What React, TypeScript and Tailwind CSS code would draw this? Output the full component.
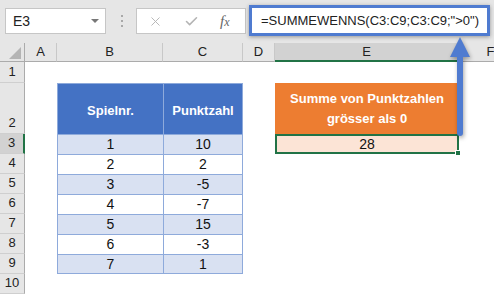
import { X, Check } from "lucide-react";

const rows = [
  { nr: "1", pts: "10" },
  { nr: "2", pts: "2" },
  { nr: "3", pts: "-5" },
  { nr: "4", pts: "-7" },
  { nr: "5", pts: "15" },
  { nr: "6", pts: "-3" },
  { nr: "7", pts: "1" },
];

const font = "font-['Liberation_Sans',Arial,sans-serif]";

function ColHeader({ label, selected }: { label: string; selected?: boolean }) {
  return (
    <div
      className={
        "flex items-center justify-center border-r border-[#c8c8c8] text-[13px] text-[#222] " +
        (selected
          ? "border-b-2 border-b-[#217346] bg-[#d2d2d2]"
          : "border-b border-b-[#ababab] bg-[#e6e6e6]")
      }
    >
      {label}
    </div>
  );
}

function RowHeader({ n, selected }: { n: number; selected?: boolean }) {
  return (
    <div
      className={
        "flex items-end justify-center border-b border-[#cfcfcf] pb-[1px] text-[13px] text-[#222] " +
        (selected
          ? "border-r-2 border-r-[#217346] bg-[#d2d2d2]"
          : "border-r border-r-[#ababab] bg-[#e6e6e6]")
      }
    >
      {n}
    </div>
  );
}

export default function App() {
  return (
    <div className={`relative h-[294px] w-[494px] overflow-hidden bg-white ${font}`}>
      {/* toolbar */}
      <div className="flex h-[43px] items-start bg-[#e6e6e6] pt-[8px]">
        <div className="ml-[5px] flex h-[26px] w-[101px] items-center justify-between border border-[#c6c6c6] bg-white pl-[7px] pr-[6px] text-[14px] text-[#222]">
          E3
          <span className="h-0 w-0 border-x-[4px] border-t-[4px] border-x-transparent border-t-[#777]" />
        </div>
        <div className="ml-[15px] mt-[7px] flex flex-col gap-[3px]">
          <span className="h-[2px] w-[2px] bg-[#a8a8a8]" />
          <span className="h-[2px] w-[2px] bg-[#a8a8a8]" />
          <span className="h-[2px] w-[2px] bg-[#a8a8a8]" />
        </div>
        <div className="ml-[13px] flex h-[26px] w-[110px] items-center border border-[#c6c6c6] bg-white pl-[11px]">
          <X className="h-[15px] w-[15px] text-[#b4b4b4]" strokeWidth={1.5} />
          <Check className="ml-[21px] h-[15px] w-[15px] text-[#b4b4b4]" strokeWidth={2.5} />
          <span className="ml-[21px] font-['Liberation_Serif',serif] text-[15px] italic text-[#666]">
            f<span className="text-[12px]">x</span>
          </span>
        </div>
        <div className="-mt-[3px] ml-[3px] flex h-[31px] w-[241px] shrink-0 items-center border-[3px] border-[#4f7bd0] bg-white pl-[9px] text-[13px] text-[#222] shadow-[0_1px_4px_rgba(0,0,0,0.35)]">
          =SUMMEWENNS(C3:C9;C3:C9;"&gt;0")
        </div>
      </div>

      {/* sheet */}
      <div className="grid grid-cols-[25px_32px_106px_80px_32px_184px_64px] grid-rows-[19px_21px_51px_repeat(8,20px)]">
        <div className="relative border-b border-r border-[#ababab] bg-[#e6e6e6]">
          <span className="absolute bottom-[2px] right-[3px] h-0 w-0 border-b-[12px] border-l-[12px] border-b-[#b4b4b4] border-l-transparent" />
        </div>
        <ColHeader label="A" />
        <ColHeader label="B" />
        <ColHeader label="C" />
        <ColHeader label="D" />
        <ColHeader label="E" selected />
        <ColHeader label="F" />

        {/* row 1 */}
        <RowHeader n={1} />
        <div className="col-span-6" />

        {/* row 2 */}
        <RowHeader n={2} />
        <div />
        <div className="flex items-center justify-center border-l border-t border-[#8eaadb] bg-[#4472c4] pt-[3px] text-[13px] font-bold text-white">
          Spielnr.
        </div>
        <div className="flex items-center justify-center border-x border-t border-[#8eaadb] bg-[#4472c4] pt-[3px] text-[13px] font-bold text-white">
          Punktzahl
        </div>
        <div />
        <div className="flex flex-col items-center justify-center bg-[#ed7d31] pt-[1px] text-[13px] font-bold leading-[20px] text-white">
          <span>Summe von Punktzahlen</span>
          <span>grösser als 0</span>
        </div>
        <div />

        {rows.map((r, i) => {
          const bg = i % 2 === 0 ? "bg-[#d9e1f2]" : "bg-white";
          const last = i === rows.length - 1 ? " border-b" : "";
          return (
            <div key={r.nr} className="contents">
              <RowHeader n={i + 3} selected={i === 0} />
              <div />
              <div className={`flex items-center justify-center border-l border-t border-[#8eaadb] text-[14px] text-[#111] ${bg}${last}`}>
                {r.nr}
              </div>
              <div className={`flex items-center justify-center border-x border-t border-[#8eaadb] text-[14px] text-[#111] ${bg}${last}`}>
                {r.pts}
              </div>
              <div />
              {i === 0 ? (
                <div className="relative flex items-center justify-center border-2 border-[#217346] bg-[#fce4d6] text-[14px] text-[#111]">
                  28
                  <span className="absolute -bottom-[4px] -right-[4px] h-[6px] w-[6px] border border-white bg-[#217346]" />
                </div>
              ) : (
                <div />
              )}
              <div />
            </div>
          );
        })}

        <RowHeader n={10} />
        <div className="col-span-6" />
      </div>

      {/* arrow overlay */}
      <div className="absolute left-[450px] top-[37px] flex flex-col items-center drop-shadow-[1px_2px_2px_rgba(0,0,0,0.35)]">
        <span className="h-0 w-0 border-x-[10px] border-b-[20px] border-x-transparent border-b-[#4f7bd0]" />
        <span className="h-[79px] w-[6px] rounded-b-[3px] bg-[#4f7bd0]" />
      </div>
    </div>
  );
}
